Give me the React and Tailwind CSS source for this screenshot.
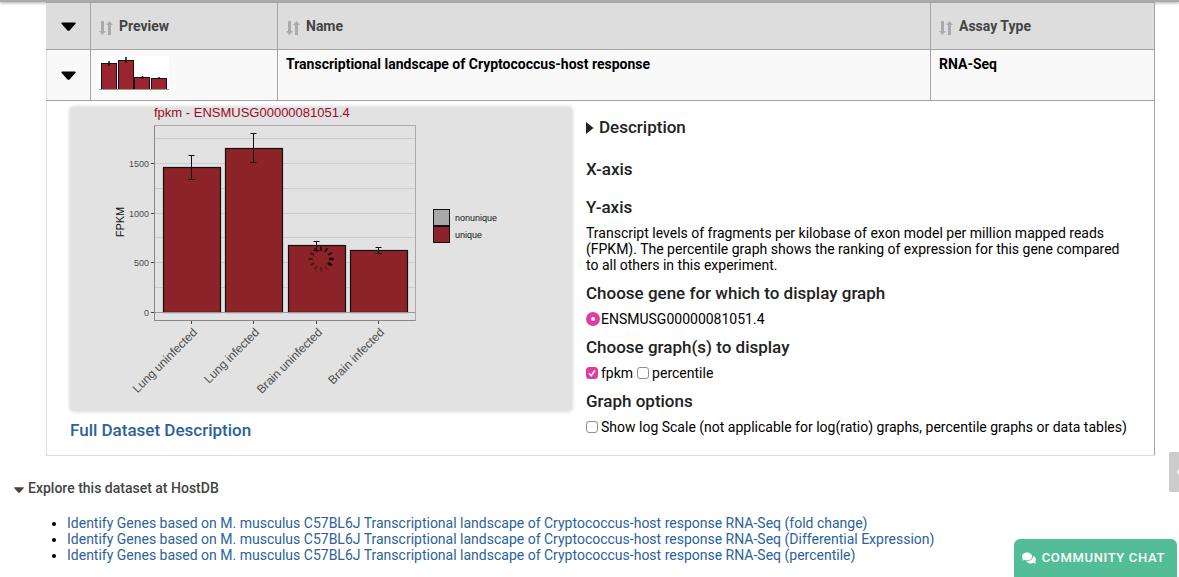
import { useState } from "react"

const yTicks = [
  { label: "1500", y: 56 },
  { label: "1000", y: 106 },
  { label: "500", y: 155 },
  { label: "0", y: 205 },
]

const gridLines = [31, 56, 81, 106, 130, 155, 180]

const bars = [
  { label: "Lung uninfected", x: 93, top: 60, errTop: 48, errBottom: 72 },
  { label: "Lung infected", x: 155, top: 41, errTop: 26, errBottom: 55 },
  { label: "Brain uninfected", x: 218, top: 138, errTop: 134, errBottom: 143 },
  { label: "Brain infected", x: 280, top: 143, errTop: 140, errBottom: 146 },
]

const links = ["fold change", "Differential Expression", "percentile"]

const CaretDown = ({ className }) => (
  <svg viewBox="0 0 15 9" className={className} aria-hidden="true">
    <path d="M1 0.5h13a.7.7 0 0 1 .5 1.2L9 8a2 2 0 0 1-3 0L.5 1.7A.7.7 0 0 1 1 .5z" fill="currentColor" />
  </svg>
)

const SortIcon = () => (
  <svg viewBox="0 0 14 16" className="w-3.5 h-4 mt-1 text-[#aaaaaa]" aria-hidden="true">
    <path d="M2 1h3v10h2L3.500 15 0 11h2zM9 15h3V5h2L10.500 1 7 5h2z" fill="currentColor" />
  </svg>
)

const PreviewGraph = () => (
  <svg viewBox="0 0 70 34" className="block w-[70px] h-[34px]" role="img" aria-label="Preview graph">
    <rect width="70" height="34" fill="#ffffff" />
    <g fill="#9b2430" stroke="#111111" strokeWidth="1">
      <rect x="2.500" y="7.500" width="15" height="26" />
      <rect x="19.500" y="4.500" width="15" height="29" />
      <rect x="35.500" y="21.500" width="15" height="12" />
      <rect x="52.500" y="22.500" width="15" height="11" />
    </g>
    <path d="M10 5v5M27 1v6M43.500 20v3M60 21v2" stroke="#111111" strokeWidth="1.500" />
    <path d="M0 33.500h70" stroke="#999999" />
  </svg>
)

const Spinner = () => (
  <g stroke="#000000" transform="translate(251 152)">
    {Array.from({ length: 12 }, (_, i) => (
      <line
        key={i}
        x1="8"
        y1="0"
        x2="12.500"
        y2="0"
        strokeWidth={i < 2 ? 2.4 : 2}
        opacity={i < 2 ? 1 : 0.2 + (i - 2) * 0.06}
        transform={`rotate(${i * 30})`}
      />
    ))}
  </g>
)

const ExpressionGraph = () => (
  <svg viewBox="0 0 502 304" className="block w-full h-auto overflow-visible font-['Liberation_Sans',Arial,sans-serif]" role="img" aria-label="FPKM bar chart">
    <text x="84" y="10" fontSize="13" fill="#9b0a28">fpkm - ENSMUSG00000081051.4</text>
    {gridLines.map((y) => (
      <line key={y} x1="84" x2="346" y1={y + 0.5} y2={y + 0.5} stroke="#cccccc" />
    ))}
    {bars.map((bar) => (
      <g key={bar.label}>
        <rect x={bar.x + 0.5} y={bar.top + 0.5} width="57" height={205 - bar.top} fill="#8b2329" stroke="#111111" strokeWidth="1.200" />
        <path
          d={`M${bar.x + 25.5} ${bar.errTop + 0.5}h6m-3 0V${bar.errBottom + 0.5}m-3 0h6`}
          fill="none"
          stroke="#111111"
        />
        <line x1={bar.x + 28.5} x2={bar.x + 28.5} y1="214" y2="217" stroke="#444444" />
        <text
          fontSize="12"
          fill="#4d4d4d"
          textAnchor="end"
          transform={`translate(${bar.x + 35} 226) rotate(-45)`}
        >
          {bar.label}
        </text>
      </g>
    ))}
    <line x1="84" x2="346" y1="205.500" y2="205.500" stroke="#999999" />
    <rect x="84.500" y="18.500" width="261" height="195" fill="none" stroke="#aaaaaa" />
    <path d="M84.500 18.500v195h261" fill="none" stroke="#888888" />
    {yTicks.map((tick) => (
      <g key={tick.label}>
        <line x1="81" x2="84" y1={tick.y + 0.5} y2={tick.y + 0.5} stroke="#444444" />
        <text x="79" y={tick.y + 4} fontSize="9" fill="#4d4d4d" textAnchor="end">{tick.label}</text>
      </g>
    ))}
    <text fontSize="11" fill="#111111" textAnchor="middle" transform="translate(54 115) rotate(-90)">FPKM</text>
    <rect x="363.500" y="102.500" width="16" height="16" fill="#a9a9a9" stroke="#111111" />
    <rect x="363.500" y="119.500" width="16" height="16" fill="#8b2329" stroke="#111111" />
    <text x="385" y="114" fontSize="9" fill="#111111">nonunique</text>
    <text x="385" y="131" fontSize="9" fill="#111111">unique</text>
    <Spinner />
  </svg>
)

const HeaderCell = ({ label, className }) => (
  <th className={`border border-[#a4a4a4] px-2 text-left align-middle ${className}`}>
    <button type="button" className="flex items-center gap-1.5 text-sm font-bold text-[#444444]">
      <SortIcon />
      {label}
    </button>
  </th>
)

const Heading = ({ children }) => (
  <h4 className="pt-2.5 pb-2 text-[17px] leading-5 font-medium text-[#222222]">{children}</h4>
)

const Checkbox = ({ id, label, checked, onChange }) => (
  <div className="flex items-center gap-[3px]">
    <span className="relative flex w-3 h-3">
      <input
        type="checkbox"
        id={id}
        checked={checked}
        onChange={onChange}
        className="w-3 h-3 appearance-none rounded-[3px] border border-[#8f8f8f] bg-white checked:border-[#df3d9f] checked:bg-[#df3d9f]"
      />
      {checked && (
        <svg viewBox="0 0 12 12" className="absolute inset-0 w-3 h-3 pointer-events-none" aria-hidden="true">
          <path d="M3 6.200 5.200 8.700 9 3.300" fill="none" stroke="white" strokeWidth="1.500" />
        </svg>
      )}
    </span>
    <label htmlFor={id}>{label}</label>
  </div>
)

const GraphSettings = () => {
  const [graphs, setGraphs] = useState({ fpkm: true, percentile: false })
  const [logScale, setLogScale] = useState(false)

  const toggleGraph = (name) => setGraphs({ ...graphs, [name]: !graphs[name] })

  return (
    <div className="flex-1 pt-4 pr-6 text-sm leading-4 text-black">
      <button type="button" className="flex items-center gap-[5px] mb-3 text-[17px] leading-5 font-medium text-[#222222]">
        <svg viewBox="0 0 8 12" className="w-2 h-3 mt-0.5" aria-hidden="true">
          <path d="M0 0l7.500 6L0 12z" fill="currentColor" />
        </svg>
        Description
      </button>
      <Heading>X-axis</Heading>
      <Heading>Y-axis</Heading>
      <p className="max-w-[544px]">
        Transcript levels of fragments per kilobase of exon model per million mapped reads (FPKM). The percentile
        graph shows the ranking of expression for this gene compared to all others in this experiment.
      </p>
      <Heading>Choose gene for which to display graph</Heading>
      <div className="flex items-center gap-px">
        <input
          type="radio"
          id="gene"
          name="gene"
          defaultChecked
          className="w-3.5 h-3.5 appearance-none rounded-full border-5 border-[#df3d9f] bg-white"
        />
        <label htmlFor="gene">ENSMUSG00000081051.4</label>
      </div>
      <Heading>Choose graph(s) to display</Heading>
      <div className="flex gap-1">
        <Checkbox id="fpkm" label="fpkm" checked={graphs.fpkm} onChange={() => toggleGraph("fpkm")} />
        <Checkbox id="percentile" label="percentile" checked={graphs.percentile} onChange={() => toggleGraph("percentile")} />
      </div>
      <Heading>Graph options</Heading>
      <Checkbox
        id="logScale"
        label="Show log Scale (not applicable for log(ratio) graphs, percentile graphs or data tables)"
        checked={logScale}
        onChange={() => setLogScale(!logScale)}
      />
    </div>
  )
}

const DatasetTable = () => (
  <table className="w-full table-fixed border-collapse">
    <thead>
      <tr className="h-[47px] bg-[#dddddd]">
        <th className="w-11 border border-[#a4a4a4] border-l-[#dddddd]">
          <button type="button" aria-label="Expand all" className="block mx-auto">
            <CaretDown className="w-[15px] h-[9px]" />
          </button>
        </th>
        <HeaderCell label="Preview" className="w-[187px]" />
        <HeaderCell label="Name" className="" />
        <HeaderCell label="Assay Type" className="w-56" />
      </tr>
    </thead>
    <tbody>
      <tr className="h-[51px] bg-[#f9f9f9] text-sm leading-4 font-bold text-black">
        <td className="border border-[#a4a4a4] border-l-[#dddddd]">
          <button type="button" aria-label="Collapse row" className="block mx-auto">
            <CaretDown className="w-[15px] h-[9px]" />
          </button>
        </td>
        <td className="border border-[#a4a4a4] px-2 pt-1.5 align-top"><PreviewGraph /></td>
        <td className="border border-[#a4a4a4] px-2 pt-1.5 align-top">Transcriptional landscape of Cryptococcus-host response</td>
        <td className="border border-[#a4a4a4] px-2 pt-1.5 align-top">RNA-Seq</td>
      </tr>
      <tr>
        <td colSpan={4} className="border border-[#dddddd] border-t-[#a4a4a4] border-r-[#a4a4a4] p-0">
          <div className="flex gap-3.5 pl-[23px] pb-[15px]">
            <div className="w-[502px] shrink-0 pt-1.5">
              <div className="rounded-sm bg-[#e2e2e2] shadow-[0_0_4px_#cccccc]">
                <ExpressionGraph />
              </div>
              <a href="#dataset" className="block mt-[9px] text-[17px] leading-5 font-medium text-[#2c6299]">Full Dataset Description</a>
            </div>
            <GraphSettings />
          </div>
        </td>
      </tr>
    </tbody>
  </table>
)

const App = () => {
  return (
    <div className="bg-white font-[Roboto,sans-serif]">
      <div className="h-0.5 bg-[#aaaaaa] shadow-[0_1px_3px_#999999]" />
      <main className="pl-[14px] pr-6">
        <div className="pl-8">
          <DatasetTable />
        </div>
        <section className="pt-6">
          <button type="button" className="flex items-center gap-1 text-sm leading-4 font-medium text-[#444444]">
            <CaretDown className="w-2.5 h-1.5 mt-1" />
            Explore this dataset at HostDB
          </button>
          <ul className="mt-[19px] pl-[53px] list-disc text-sm leading-4 text-black">
            {links.map((link) => (
              <li key={link}>
                <a href="#search" className="text-[#2c6299]">
                  Identify Genes based on M. musculus C57BL6J Transcriptional landscape of Cryptococcus-host response RNA-Seq ({link})
                </a>
              </li>
            ))}
          </ul>
        </section>
      </main>

      <button type="button" aria-label="Open panel" className="fixed right-0 bottom-[85px] flex items-center justify-end w-2.5 h-10 rounded-l-xs bg-[#cccccc] text-white">
        <svg viewBox="0 0 2 6" className="w-0.5 h-1.5" aria-hidden="true">
          <path d="M2 0v6L0 3z" fill="currentColor" />
        </svg>
      </button>
      <button type="button" className="fixed right-0.5 bottom-0 flex items-center gap-1.5 h-[38px] pl-2 pr-3 rounded-t-md bg-[#52bd97] text-[13px] font-medium text-white">
        <svg viewBox="0 0 576 512" className="w-3.5 h-3.5" aria-hidden="true">
          <path d="M416 192c0-88.400-93.100-160-208-160S0 103.600 0 192c0 34.300 14.100 65.900 38 92-13.400 30.200-35.500 54.200-35.800 54.500-2.200 2.300-2.800 5.700-1.500 8.700S4.800 352 8 352c36.600 0 66.900-12.300 88.700-25 32.200 15.700 70.300 25 111.300 25 114.900 0 208-71.600 208-160zm122 220c23.900-26 38-57.700 38-92 0-66.900-53.500-124.200-129.300-148.100.9 6.600 1.300 13.300 1.300 20.100 0 105.900-107.700 192-240 192-10.800 0-21.300-.8-31.700-1.900C207.800 439.600 281.800 480 368 480c41 0 79.100-9.200 111.300-25 21.800 12.700 52.100 25 88.700 25 3.200 0 6.100-1.900 7.300-4.800 1.300-2.900.7-6.300-1.500-8.700-.3-.3-22.400-24.200-35.800-54.500z" fill="currentColor" />
        </svg>
        <span className="tracking-wider">COMMUNITY CHAT</span>
      </button>
    </div>
  )
}

export default App
